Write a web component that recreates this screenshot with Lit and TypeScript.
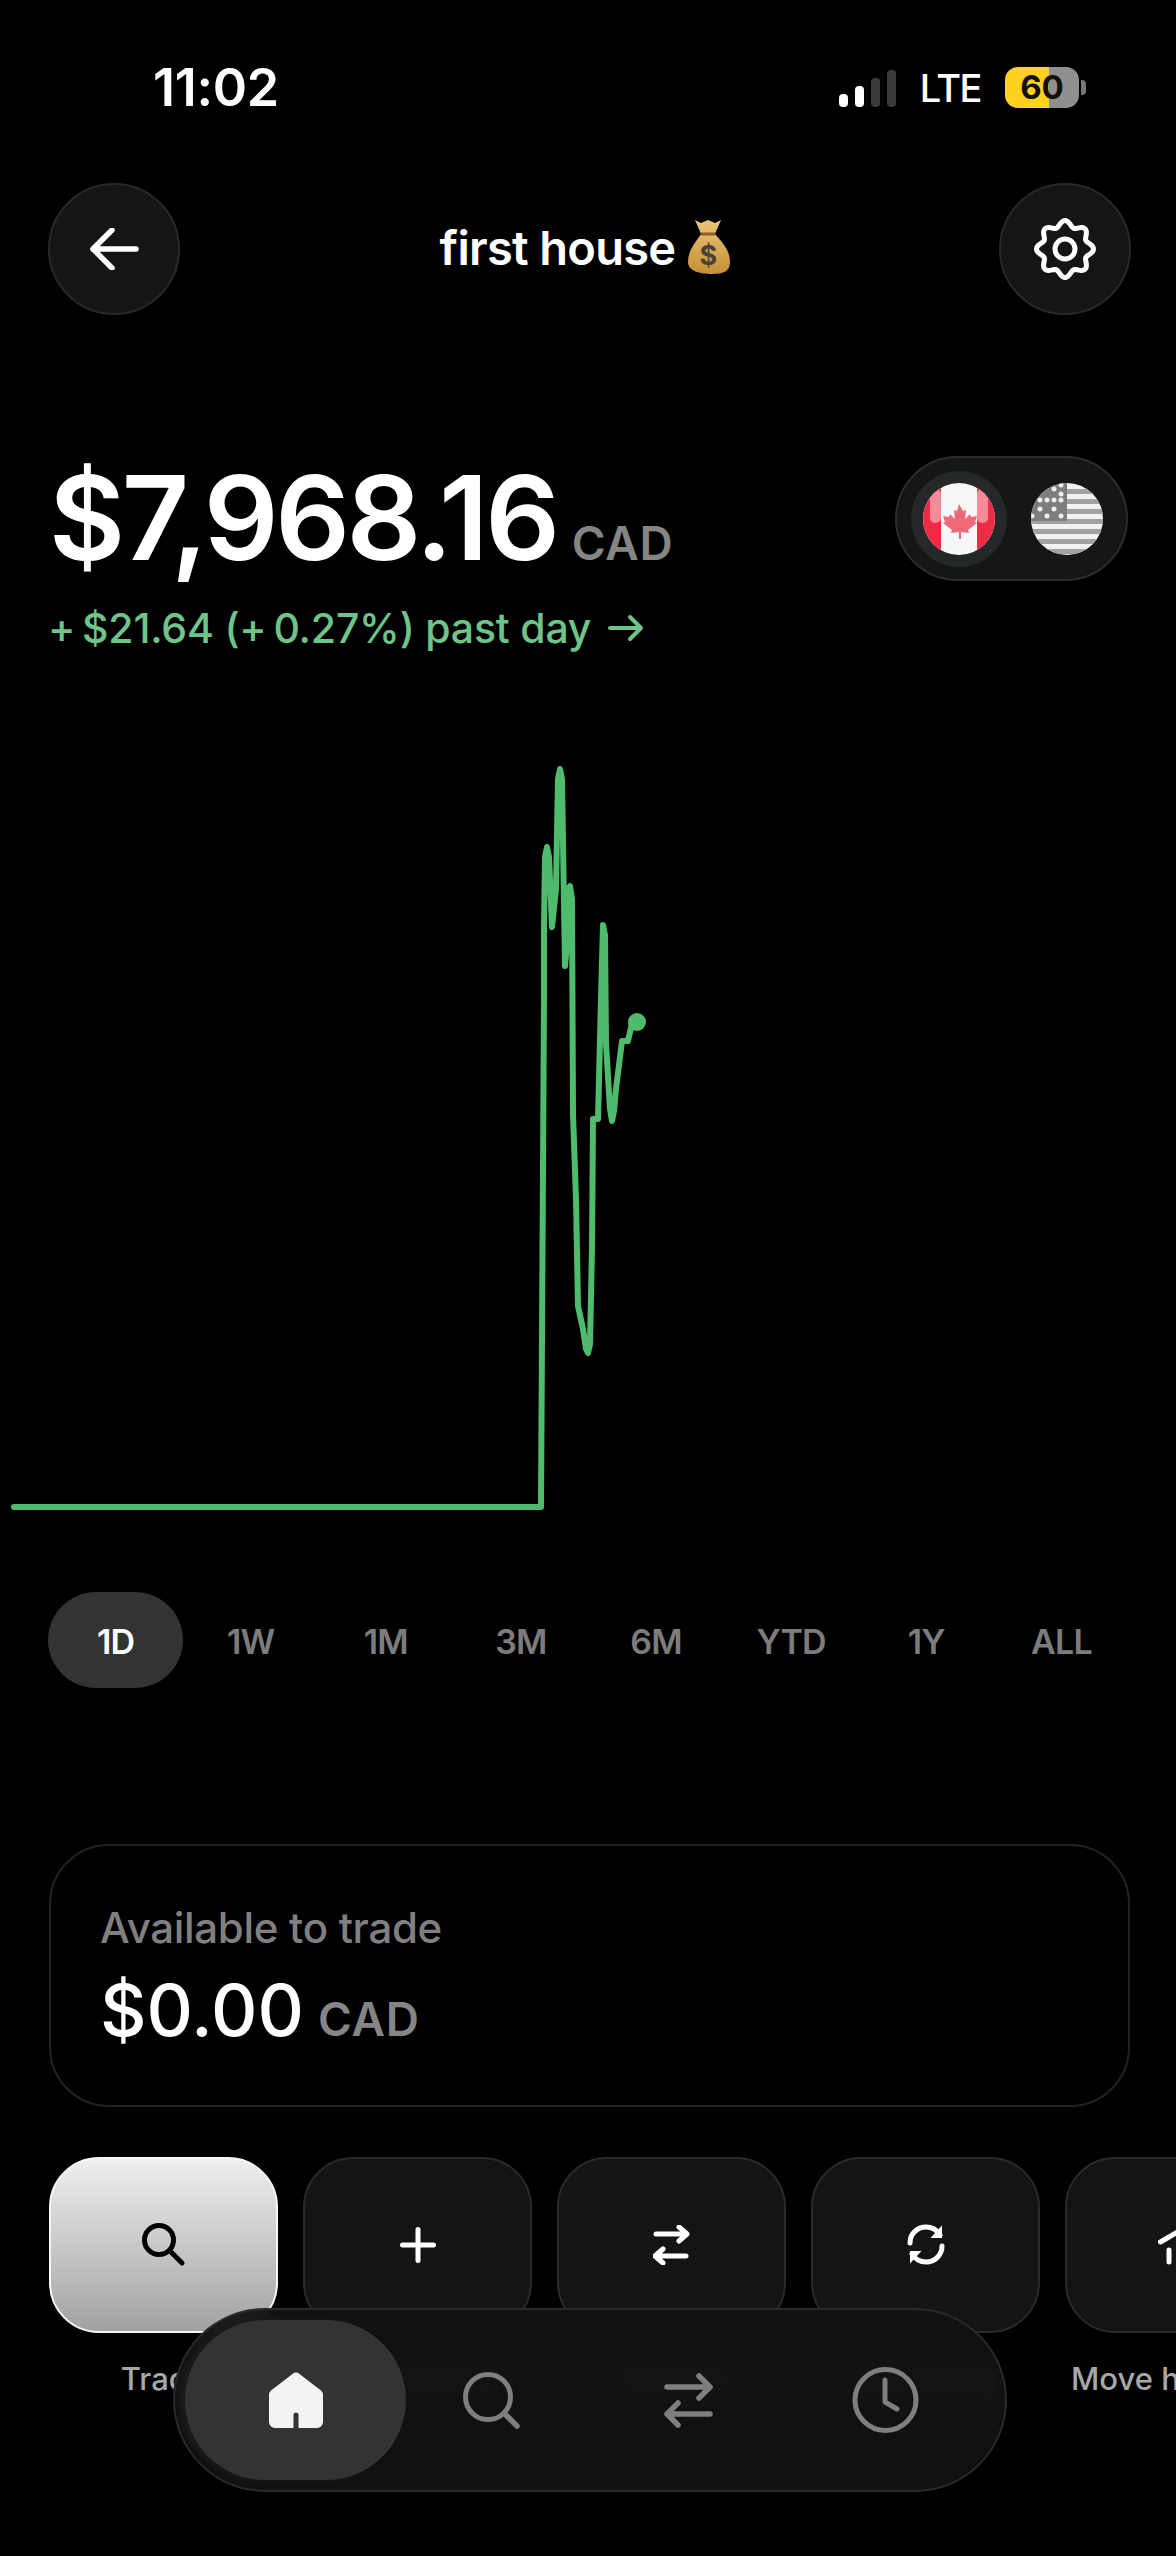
import { css, html, LitElement, svg } from "lit";
import { customElement } from "lit/decorators.js";

const RANGES = ["1D", "1W", "1M", "3M", "6M", "YTD", "1Y", "ALL"];

// page coordinates, the chart's viewBox starts at y=700
const CHART_POINTS =
  "14,1508 541,1508 544,1000 544,928 545,858 547,848 549,858 552,928 556,890 558,780 560,770 562,780 565,967 567,945 568,892 570,887 572,900 573,1115 576,1200 578,1307 583,1330 586,1350 588,1354 590,1345 592,1250 593,1120 598,1120 601,1000 603,926 605,936 606,1045 610,1110 612,1122 614,1112 616,1090 622,1042 628,1042 632,1024 637,1022";

function gearPath(): string {
  const pts: string[] = [];
  for (let i = 0; i < 120; i++) {
    const a = (i / 120) * Math.PI * 2;
    const r = 25.5 + 3 * Math.cos(8 * a);
    pts.push(`${(31 + r * Math.sin(a)).toFixed(2)},${(31 - r * Math.cos(a)).toFixed(2)}`);
  }
  return `M${pts.join("L")}Z`;
}

const icons = {
  back: svg`<path d="M47 21H4M23 2 4 21l19 19" fill="none" stroke="#fff" stroke-width="5.5" stroke-linecap="round" stroke-linejoin="round"/>`,
  search: svg`<circle cx="17" cy="17" r="14.5" fill="none" stroke="currentColor" stroke-width="5"/><path d="M28 28l12 12" stroke="currentColor" stroke-width="5" stroke-linecap="round"/>`,
  plus: svg`<path d="M18 2.500v31M2.500 18h31" stroke="currentColor" stroke-width="5" stroke-linecap="round"/>`,
  swap: svg`<path d="M3 9h31M26 2l8 7-8 7M33 31H2M10 24l-8 7 8 7" fill="none" stroke="currentColor" stroke-width="5" stroke-linecap="round" stroke-linejoin="round"/>`,
  cycle: svg`<path d="M5 19C5 10 12 3 21 3c6 0 11 3 14 8M37 22c0 9-7 16-16 16-6 0-11-3-14-8" fill="none" stroke="currentColor" stroke-width="5" stroke-linecap="round"/><path d="M37 1.500V14H25.500zM5 39.500V27H16.500z" fill="currentColor"/>`,
  bank: svg`<path d="M2.500 19 22 7.500l19 11.500M11 27v12M23 27v12M35 27v12" fill="none" stroke="currentColor" stroke-width="5" stroke-linecap="round" stroke-linejoin="round"/>`,
  clock: svg`<circle cx="33.500" cy="33" r="30.500" fill="none" stroke="currentColor" stroke-width="5"/><path d="M33 13v22l12 7" fill="none" stroke="currentColor" stroke-width="5" stroke-linecap="round" stroke-linejoin="round"/>`,
};

@customElement("app-root")
export class AppRoot extends LitElement {
  static styles = css`
    :host {
      display: block;
      position: relative;
      width: 1176px;
      height: 2556px;
      overflow: hidden;
      background: #000;
      color: #fff;
      font-family: Inter, "Liberation Sans", sans-serif;
    }
    .status {
      height: 183px;
      box-sizing: border-box;
      padding: 62px 90px 0 153px;
      display: flex;
      justify-content: space-between;
      align-items: flex-start;
    }
    .time {
      font-size: 52px;
      line-height: 52px;
      font-weight: 600;
      letter-spacing: -0.3px;
    }
    .indicators {
      display: flex;
      align-items: center;
      margin-top: 5px;
    }
    .bars {
      display: flex;
      align-items: flex-end;
      gap: 7px;
      height: 38px;
      margin-right: 24px;
    }
    .bars i {
      width: 9px;
      border-radius: 4px;
      background: #3a3a3a;
    }
    .bars i.on {
      background: #fff;
    }
    .lte {
      font-size: 38px;
      line-height: 40px;
      font-weight: 500;
      letter-spacing: -1.5px;
      margin-right: 24px;
    }
    .battery {
      width: 74px;
      height: 41px;
      border-radius: 13px;
      background: linear-gradient(90deg, #ffd21f 60%, #8f8f8f 60%);
      color: #111;
      font-size: 33px;
      line-height: 41px;
      font-weight: 700;
      text-align: center;
    }
    .battery-tip {
      width: 5px;
      height: 15px;
      margin-left: 2px;
      border-radius: 0 4px 4px 0;
      background: #777;
    }
    .header {
      height: 132px;
      box-sizing: border-box;
      padding: 0 45px 0 48px;
      display: flex;
      align-items: center;
      justify-content: space-between;
    }
    .round {
      width: 132px;
      height: 132px;
      box-sizing: border-box;
      border-radius: 50%;
      background: #151515;
      border: 2px solid #282828;
      display: flex;
      align-items: center;
      justify-content: center;
    }
    .title {
      display: flex;
      align-items: center;
      gap: 11px;
      padding-right: 9px;
      font-size: 47px;
      font-weight: 600;
      letter-spacing: -0.7px;
      margin-top: -4px;
    }
    .hero {
      height: 243px;
      margin-top: 141px;
      box-sizing: border-box;
      padding: 0 48px 0 49px;
      display: flex;
      justify-content: space-between;
      align-items: flex-start;
    }
    .balance {
      display: flex;
      align-items: baseline;
      gap: 15px;
      line-height: 124px;
      font-size: 117px;
      font-weight: 600;
      letter-spacing: -3.4px;
    }
    .unit {
      font-size: 46px;
      font-weight: 600;
      letter-spacing: 0.8px;
      color: #858585;
    }
    .change {
      display: flex;
      align-items: center;
      gap: 17px;
      margin-top: -2px;
      margin-left: -1px;
      font-size: 41px;
      line-height: 50px;
      font-weight: 500;
      letter-spacing: -0.2px;
      color: #6fc48a;
    }
    .toggle {
      width: 233px;
      height: 125px;
      box-sizing: border-box;
      padding: 0 14px;
      border-radius: 63px;
      background: #161616;
      border: 2px solid #2c2c2c;
      display: flex;
      align-items: center;
      gap: 12px;
    }
    .flag {
      width: 96px;
      height: 96px;
      flex: none;
      border-radius: 50%;
      display: flex;
      align-items: center;
      justify-content: center;
    }
    .flag.active {
      background: #252829;
    }
    .chart {
      display: block;
      width: 1176px;
      height: 893px;
    }
    .ranges {
      display: grid;
      grid-template-columns: repeat(8, 1fr);
      padding: 0 47px 0 48px;
    }
    .range {
      height: 96px;
      box-sizing: border-box;
      padding-top: 3px;
      display: flex;
      align-items: center;
      justify-content: center;
      font-size: 34px;
      font-weight: 600;
      color: #7c7c7c;
      letter-spacing: -0.8px;
    }
    .range.active {
      background: #333;
      border-radius: 48px;
      color: #fff;
    }
    .card {
      margin: 156px 46px 0 49px;
      height: 263px;
      box-sizing: border-box;
      border: 2px solid #222;
      border-radius: 60px;
      padding: 54px 49px 0;
    }
    .card-label {
      font-size: 42px;
      line-height: 56px;
      font-weight: 500;
      color: #808080;
      letter-spacing: -0.3px;
    }
    .card-value {
      display: flex;
      align-items: baseline;
      gap: 14px;
      margin-top: 12px;
      font-size: 72px;
      line-height: 84px;
      font-weight: 500;
    }
    .actions {
      display: flex;
      gap: 25px;
      margin: 50px 0 0 49px;
      width: 1400px;
    }
    .action {
      width: 229px;
      flex: none;
    }
    .tile {
      height: 176px;
      box-sizing: border-box;
      border-radius: 50px;
      background: #141414;
      border: 2px solid #2a2a2a;
      color: #fff;
      display: flex;
      align-items: center;
      justify-content: center;
    }
    .tile.primary {
      background: linear-gradient(180deg, #efefef 0%, #a2a2a2 100%);
      border-color: #f6f6f6;
      color: #000;
    }
    .action-label {
      margin-top: 28px;
      display: flex;
      justify-content: center;
      white-space: nowrap;
      font-size: 31px;
      line-height: 36px;
      font-weight: 500;
      color: #a8a8a8;
    }
    .nav {
      position: absolute;
      left: 173px;
      top: 2308px;
      width: 834px;
      height: 184px;
      box-sizing: border-box;
      border-radius: 92px;
      background: rgba(18, 18, 18, 0.92);
      backdrop-filter: blur(14px);
      border: 2px solid #2b2b2b;
      padding-left: 10px;
      display: flex;
      align-items: center;
      gap: 27px;
      color: #7f7f7f;
    }
    .nav-home {
      width: 221px;
      height: 160px;
      flex: none;
      margin-right: -27px;
      border-radius: 80px;
      background: #333;
      box-shadow: -5px 0 6px #1c1c1c;
      display: flex;
      align-items: center;
      justify-content: center;
    }
    .nav-item {
      width: 170px;
      flex: none;
      display: flex;
      align-items: center;
      justify-content: center;
    }
  `;

  private icon(body: unknown, size: number, h = size) {
    return html`<svg width=${size} height=${h} viewBox="0 0 ${size} ${h}">${body}</svg>`;
  }

  private renderMoneyBag() {
    return html`<svg width="44" height="56" viewBox="0 0 44 56">
      <defs>
        <linearGradient id="bag" x1="0" y1="0" x2="0" y2="1">
          <stop offset="0" stop-color="#ecc674" />
          <stop offset="1" stop-color="#c48f38" />
        </linearGradient>
      </defs>
      <path d="M9 1l6 3 7-3 7 3 6-3-6 14c7 8 15 16 15 28 0 9-6 12-18 12S2 52 2 43c0-12 8-20 13-28z" fill="url(#bag)" />
      <path d="M15 15h14" stroke="#8a6126" stroke-width="3" />
      <text x="22" y="46" text-anchor="middle" font-size="27" font-weight="700" font-family="Inter, sans-serif" fill="#4a4034">$</text>
    </svg>`;
  }

  private renderCanada() {
    return html`<svg width="72" height="72" viewBox="0 0 72 72">
      <clipPath id="ca"><circle cx="36" cy="36" r="36" /></clipPath>
      <g clip-path="url(#ca)">
        <rect width="72" height="72" fill="#f8f8f8" />
        <rect width="18" height="72" fill="#ee2b45" />
        <rect x="54" width="18" height="72" fill="#ee2b45" />
        <rect x="7" y="6" width="11" height="34" rx="5" fill="#f58a98" />
        <rect x="54" y="6" width="11" height="34" rx="5" fill="#f58a98" />
        <path
          d="M36 21l4 7 3-1-1 9 5-5 1 3 6-1-2 6 2 1-9 7 1 3-8-1v7h-2v-7l-8 1 1-3-9-7 2-1-2-6 6 1 1-3 5 5-1-9 3 1z"
          fill="#ef6a78"
        />
      </g>
    </svg>`;
  }

  private renderUs() {
    const stripes = [6, 16, 26, 36, 46, 56, 66];
    const stars: [number, number][] = [
      [30, 2], [23, 6], [30, 11], [9, 17], [23, 17], [16, 17], [30, 17], [9, 26], [23, 26], [16, 33], [30, 33], [1, 33],
    ];
    return html`<svg width="72" height="72" viewBox="0 0 72 72">
      <clipPath id="us"><circle cx="36" cy="36" r="36" /></clipPath>
      <g clip-path="url(#us)">
        <rect width="72" height="72" fill="#f2f2f2" />
        ${stripes.map((y) => svg`<rect y=${y} width="72" height="5" fill="#a2a2a2" />`)}
        <rect width="36" height="38" fill="#7d7d7d" />
        ${stars.map(([x, y]) => svg`<circle cx=${x} cy=${y} r="2.500" fill="#eee" />`)}
      </g>
    </svg>`;
  }

  render() {
    return html`
      <div class="status">
        <div class="time">11:02</div>
        <div class="indicators">
          <div class="bars">
            <i class="on" style="height:13px"></i>
            <i class="on" style="height:21px"></i>
            <i style="height:29px"></i>
            <i style="height:37px"></i>
          </div>
          <div class="lte">LTE</div>
          <div class="battery">60</div>
          <div class="battery-tip"></div>
        </div>
      </div>

      <div class="header">
        <div class="round">${this.icon(icons.back, 50, 42)}</div>
        <div class="title"><span>first house</span>${this.renderMoneyBag()}</div>
        <div class="round">
          <svg width="62" height="62" viewBox="0 0 62 62">
            <path d=${gearPath()} fill="none" stroke="#fff" stroke-width="5" stroke-linejoin="round" />
            <circle cx="31" cy="31" r="10" fill="none" stroke="#fff" stroke-width="5" />
          </svg>
        </div>
      </div>

      <div class="hero">
        <div>
          <div class="balance">$7,968.16<span class="unit">CAD</span></div>
          <div class="change">
            <span>+\u2009$21.64 (+\u20090.27%) past day</span>
            <svg width="36" height="28" viewBox="0 0 36 28">
              <path d="M2 14h31M22 3l11 11-11 11" fill="none" stroke="#6fc48a" stroke-width="4" stroke-linecap="round" stroke-linejoin="round" />
            </svg>
          </div>
        </div>
        <div class="toggle">
          <div class="flag active">${this.renderCanada()}</div>
          <div class="flag">${this.renderUs()}</div>
        </div>
      </div>

      <svg class="chart" viewBox="0 700 1176 893">
        <polyline points=${CHART_POINTS} fill="none" stroke="#4fbb6c" stroke-width="6" stroke-linejoin="round" stroke-linecap="round" />
        <circle cx="637" cy="1023" r="9" fill="#4fbb6c" />
      </svg>

      <div class="ranges">
        ${RANGES.map((r, i) => html`<div class="range ${i === 0 ? "active" : ""}">${r}</div>`)}
      </div>

      <div class="card">
        <div class="card-label">Available to trade</div>
        <div class="card-value">$0.00<span class="unit">CAD</span></div>
      </div>

      <div class="actions">
        <div class="action">
          <div class="tile primary">${this.icon(icons.search, 44)}</div>
          <div class="action-label">Trade</div>
        </div>
        <div class="action">
          <div class="tile">${this.icon(icons.plus, 36)}</div>
          <div class="action-label">Add funds</div>
        </div>
        <div class="action">
          <div class="tile">${this.icon(icons.swap, 37, 40)}</div>
          <div class="action-label">Transfer</div>
        </div>
        <div class="action">
          <div class="tile">${this.icon(icons.cycle, 42)}</div>
          <div class="action-label">Recurring</div>
        </div>
        <div class="action">
          <div class="tile">${this.icon(icons.bank, 44)}</div>
          <div class="action-label">Move holdings</div>
        </div>
      </div>

      <nav class="nav">
        <div class="nav-home">
          <svg width="56" height="56" viewBox="0 0 56 56">
            <path d="M24.500 2a5 5 0 0 1 7 0L53 18.500a5 5 0 0 1 2 4V50a6 6 0 0 1-6 6H7a6 6 0 0 1-6-6V22.500a5 5 0 0 1 2-4z" fill="#f3f3f3" />
            <path d="M25.500 56V43a2.500 2.500 0 0 1 5 0v13z" fill="#333" />
          </svg>
        </div>
        <div class="nav-item">${this.icon(svg`<circle cx="25" cy="25" r="22.5" fill="none" stroke="currentColor" stroke-width="5"/><path d="M42 42l12 12" stroke="currentColor" stroke-width="5.500" stroke-linecap="round"/>`, 57)}</div>
        <div class="nav-item">${this.icon(svg`<path d="M3 14h43M35 3l11 11-11 11M46 41H3M14 30 3 41l11 11" fill="none" stroke="currentColor" stroke-width="5.500" stroke-linecap="round" stroke-linejoin="round"/>`, 49, 55)}</div>
        <div class="nav-item">${this.icon(icons.clock, 67, 66)}</div>
      </nav>
    `;
  }
}
